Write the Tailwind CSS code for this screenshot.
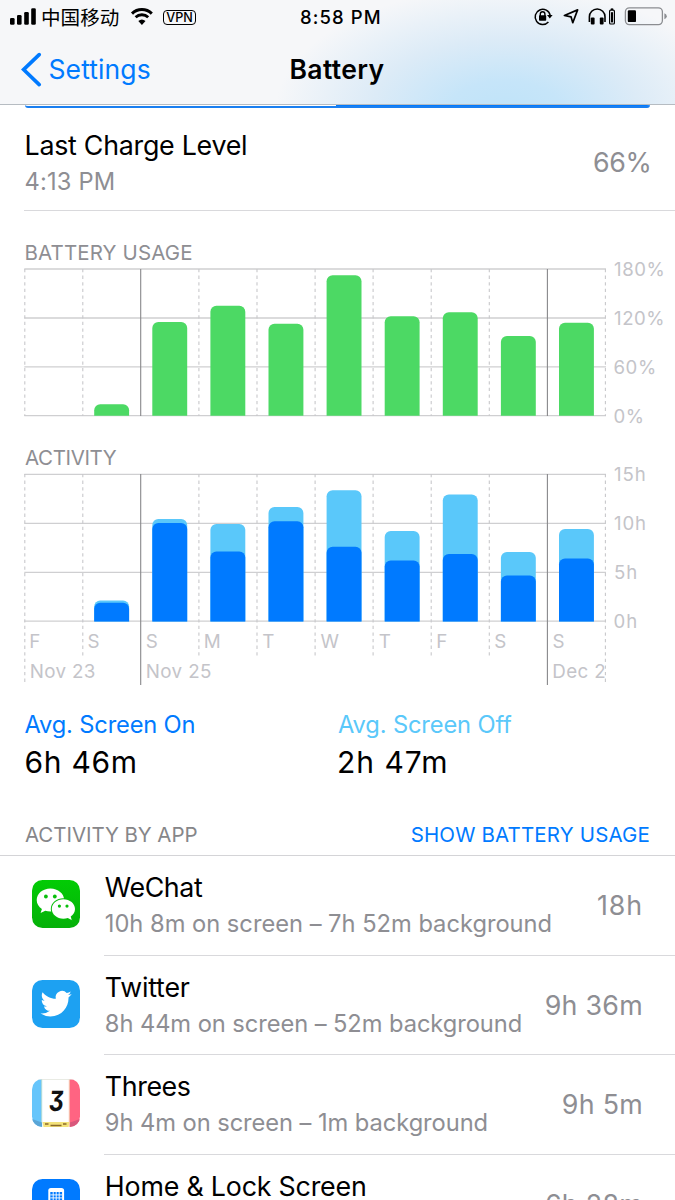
<!DOCTYPE html>
<html lang="en">
<head>
<meta charset="utf-8">
<title>Battery</title>
<script src="https://cdn.jsdelivr.net/npm/@tailwindcss/browser@4"></script>
</head>
<body class="w-[675px] h-[1200px] overflow-hidden bg-white text-black font-['Inter','Noto_Sans_CJK_SC',sans-serif]">
<div class="flex h-[1200px] flex-col overflow-hidden">

  <header class="h-[105px] shrink-0 border-b border-[#b6bcc2] bg-[#f6f7f9] bg-[radial-gradient(ellipse_230px_125px_at_505px_112px,#bfe3f9_0%,#c6e5f9_25%,#dcebf7_58%,rgba(246,247,249,0)_100%)]">
    <div class="flex h-[34px] items-center">
      <svg class="ml-[9px] h-[34px] w-[28px] shrink-0" viewBox="9 0 28 34">
        <rect x="10" y="18" width="4.6" height="6.7" rx="1.3"/><rect x="17" y="15" width="4.6" height="9.7" rx="1.3"/><rect x="24.2" y="12" width="4.6" height="12.7" rx="1.3"/><rect x="31.2" y="8.3" width="4.6" height="16.4" rx="1.3"/>
      </svg>
      <span class="ml-[4px] w-[80px] shrink-0 whitespace-nowrap font-['Noto_Sans_CJK_SC',sans-serif] text-[19.6px] leading-[34px]">中国移动</span>
      <svg class="ml-[8px] h-[34px] w-[26px] shrink-0" viewBox="129 0 26 34">
        <path d="M132 13.6a14.2 14.2 0 0 1 19.8 0" fill="none" stroke="#000" stroke-width="3"/>
        <path d="M135.6 17.3a9 9 0 0 1 12.6 0" fill="none" stroke="#000" stroke-width="2.8"/>
        <path d="M141.9 25l-3.6-4a5.6 5.6 0 0 1 7.2 0z"/>
      </svg>
      <span class="ml-[8px] flex h-[15px] w-[33px] shrink-0 items-center justify-center rounded-[4px] border-[1.4px] border-black pt-px text-[12.6px] font-medium leading-[14px]">VPN</span>
      <span class="ml-[104px] w-[90px] shrink-0 whitespace-nowrap text-[18.5px] font-medium tracking-[1.1px] leading-[34px]">8:58 PM</span>
      <svg class="ml-[140px] h-[34px] w-[140px] shrink-0" viewBox="530 0 140 34">
        <g fill="none" stroke="#000">
          <path d="M548.4 22a7.6 7.6 0 1 1 1.8-6.6" stroke-width="1.5"/>
          <path d="M540.3 16v-2a2.3 2.3 0 0 1 4.6 0v2" stroke-width="1.4"/>
          <path d="M577.6 9.9l-4.8 12.8-1.7-5.8-6.7-1.4z" stroke-width="1.7" stroke-linejoin="round"/>
          <path d="M589.4 22v-5.2a7.8 7.8 0 0 1 15.6 0V22" stroke-width="1.6"/>
          <rect x="609.6" y="10.2" width="4.8" height="13.8" rx="1" stroke-width="1.2"/>
          <rect x="625.4" y="7.8" width="37" height="16.8" rx="4" stroke="#8b8d91" stroke-width="1.3"/>
        </g>
        <path d="M547 15h5.6l-2.8 3.6z"/>
        <rect x="539" y="15.2" width="7.2" height="5.6" rx=".8"/>
        <rect x="590.8" y="17.6" width="3.8" height="7" rx="1"/><rect x="599.8" y="17.6" width="3.8" height="7" rx="1"/>
        <rect x="610.8" y="8.4" width="2.4" height="1.6"/><rect x="611" y="12.2" width="2" height="10.2"/>
        <rect x="627.8" y="10.3" width="8.2" height="11.8" rx="1.2"/>
        <path d="M664.4 13.2q2.4 1 2.4 3t-2.4 3z" fill="#8b8d91"/>
      </svg>
    </div>
    <div class="grid h-[69px] grid-cols-[289.5px_1fr] items-center text-[26.5px] leading-[36px]">
      <div class="flex items-center text-[#007aff]">
        <svg class="ml-[20px] h-[36px] w-[22px]" viewBox="20 50 22 36"><path d="M39.2 53.6L23.6 68.6l15.6 15" fill="none" stroke="#007aff" stroke-width="3.6" stroke-linecap="round"/></svg>
        <span class="ml-[6.5px] tracking-[0.1px]">Settings</span>
      </div>
      <h1 class="font-semibold tracking-[0.35px]">Battery</h1>
    </div>
  </header>

  <div class="ml-[25px] flex h-[3px] w-[625px] shrink-0 overflow-hidden rounded-b-[4px] border-b-2 border-[#1a7ff0]">
    <div class="w-[311px]"></div><div class="flex-1 bg-[#007aff]"></div>
  </div>

  <section class="ml-[24px] flex h-[103px] shrink-0 items-start justify-between border-b border-[#d9d9dc] pt-[20px]">
    <div class="pl-[0.5px]">
      <div class="h-[35px] text-[26.8px] leading-[35px] tracking-[-0.26px]">Last Charge Level</div>
      <div class="h-[37px] text-[23.7px] leading-[37px] tracking-[0.18px] text-[#8e8e93]">4:13 PM</div>
    </div>
    <div class="mr-[23.5px] text-[26.8px] leading-[69px] tracking-[-0.37px] text-[#8e8e93]">66%</div>
  </section>

  <svg class="h-[489px] w-[675px] shrink-0" viewBox="0 211 675 489" font-family="Inter, sans-serif">
    <defs>
      <clipPath id="usage"><rect x="0" y="260" width="675" height="155.8"/></clipPath>
      <clipPath id="act"><rect x="0" y="470" width="675" height="151.4"/></clipPath>
    </defs>
    <g font-size="20.5" fill="#8e8e93">
      <text x="24.5" y="260" letter-spacing=".13">BATTERY USAGE</text>
      <text x="25" y="465.3" letter-spacing="-.38">ACTIVITY</text>
    </g>
    <g stroke="#cfcfd1" stroke-width="1.3">
      <path d="M24.3 269H606M24.3 318H606M24.3 366.8H606M24.3 415.6H606M24.3 474.3H606M24.3 523.3H606M24.3 572.3H606M24.3 621.2H606"/>
    </g>
    <g stroke="#c8c8cb" stroke-width="1.1" stroke-dasharray="3.3 3.3">
      <path d="M24.8 269V416M82.8 269V416M198.9 269V416M257 269V416M315.1 269V416M373.1 269V416M431.2 269V416M489.3 269V416M605.4 269V416"/>
      <path d="M24.8 474V685M82.8 474V658M198.9 474V658M257 474V658M315.1 474V658M373.1 474V658M431.2 474V658M489.3 474V658M605.4 474V685"/>
    </g>
    <path d="M140.7 269V416M547.4 269V416M140.7 474V685M547.4 474V685" stroke="#88888b" stroke-width="1.1"/>
    <g fill="#4cd964" clip-path="url(#usage)">
      <rect x="94.2" y="404.3" width="34.9" height="30" rx="6"/>
      <rect x="152.3" y="322" width="34.9" height="110" rx="6"/>
      <rect x="210.4" y="305.7" width="34.9" height="130" rx="6"/>
      <rect x="268.5" y="323.7" width="34.9" height="110" rx="6"/>
      <rect x="326.6" y="275.3" width="34.9" height="160" rx="6"/>
      <rect x="384.7" y="316.3" width="34.9" height="120" rx="6"/>
      <rect x="442.8" y="312.2" width="34.9" height="120" rx="6"/>
      <rect x="500.9" y="336" width="34.9" height="100" rx="6"/>
      <rect x="559" y="322.8" width="34.9" height="110" rx="6"/>
    </g>
    <g fill="#5ac8fa" clip-path="url(#act)">
      <rect x="94.2" y="600.4" width="34.9" height="40" rx="6"/>
      <rect x="152.3" y="519.1" width="34.9" height="120" rx="6"/>
      <rect x="210.4" y="524" width="34.9" height="120" rx="6"/>
      <rect x="268.5" y="507" width="34.9" height="130" rx="6"/>
      <rect x="326.6" y="490.3" width="34.9" height="150" rx="6"/>
      <rect x="384.7" y="531" width="34.9" height="110" rx="6"/>
      <rect x="442.8" y="494.4" width="34.9" height="140" rx="6"/>
      <rect x="500.9" y="552" width="34.9" height="90" rx="6"/>
      <rect x="559" y="529" width="34.9" height="110" rx="6"/>
    </g>
    <g fill="#007aff" clip-path="url(#act)">
      <rect x="94.2" y="602.8" width="34.9" height="40" rx="6"/>
      <rect x="152.3" y="523" width="34.9" height="120" rx="6"/>
      <rect x="210.4" y="551.4" width="34.9" height="90" rx="6"/>
      <rect x="268.5" y="521.3" width="34.9" height="120" rx="6"/>
      <rect x="326.6" y="546.7" width="34.9" height="90" rx="6"/>
      <rect x="384.7" y="560.4" width="34.9" height="80" rx="6"/>
      <rect x="442.8" y="554" width="34.9" height="90" rx="6"/>
      <rect x="500.9" y="575.6" width="34.9" height="60" rx="6"/>
      <rect x="559" y="558.4" width="34.9" height="90" rx="6"/>
    </g>
    <g font-size="18.6" fill="#c4c4c9" letter-spacing=".58">
      <text x="614" y="275.8">180%</text><text x="614" y="324.8">120%</text><text x="613.5" y="373.7">60%</text><text x="613.5" y="422.5">0%</text>
      <g letter-spacing=".9"><text x="614" y="481">15h</text><text x="614" y="530">10h</text><text x="614" y="579">5h</text><text x="613.5" y="627.8">0h</text></g>
    </g>
    <g font-size="18.8" fill="#c4c4c9">
      <text x="29.3" y="647.8">F</text><text x="87.6" y="647.8">S</text><text x="145.7" y="647.8">S</text><text x="203.7" y="647.8">M</text><text x="262.3" y="647.8">T</text><text x="320.5" y="647.8">W</text><text x="378.7" y="647.8">T</text><text x="436.3" y="647.8">F</text><text x="494.3" y="647.8">S</text><text x="552.5" y="647.8">S</text>
      <text x="29.7" y="677.8" letter-spacing=".33">Nov 23</text><text x="145.7" y="677.8" letter-spacing=".42">Nov 25</text><text x="552.3" y="677.8" letter-spacing=".35">Dec 2</text>
    </g>
  </svg>

  <section class="grid h-[112px] shrink-0 grid-cols-[313.5px_1fr] pl-[24.5px] pt-[6px]">
    <div>
      <div class="h-[37px] text-[23.7px] leading-[38px] tracking-[-0.17px] text-[#007aff]">Avg. Screen On</div>
      <div class="h-[38px] text-[30px] leading-[38px] tracking-[0.7px]">6h 46m</div>
    </div>
    <div>
      <div class="h-[37px] text-[23.7px] leading-[38px] tracking-[-0.14px] text-[#5ac8fa]">Avg. Screen Off</div>
      <div class="-ml-px h-[38px] text-[30px] leading-[38px] tracking-[1px]">2h 47m</div>
    </div>
  </section>

  <div class="flex h-[44px] shrink-0 items-center justify-between border-b border-[#d4d4d7] pl-[25px] pr-[25px] pt-[2px] text-[20.5px] leading-[41px]">
    <span class="tracking-[-0.07px] text-[#868689]">ACTIVITY BY APP</span>
    <span class="tracking-[0.16px] text-[#007aff]">SHOW BATTERY USAGE</span>
  </div>

  <ul>
    <li class="flex h-[99.5px]">
      <svg class="ml-[32.3px] mt-[24px] h-[48px] w-[48px] shrink-0" viewBox="0 0 48 48">
        <defs><linearGradient id="wg" x2="0" y2="1"><stop stop-color="#02cc05"/><stop offset="1" stop-color="#05b009"/></linearGradient></defs>
        <rect width="48" height="48" rx="10.5" fill="url(#wg)"/>
        <path d="M18.4 8.6C10.8 8.6 4.7 13.7 4.7 20.1c0 3.7 2 6.9 5.2 9l-1.300 4 4.700-2.400c1.600.5 3.300.8 5.100.8 7.600 0 13.800-5.100 13.800-11.400S26 8.600 18.400 8.600z" fill="#fff"/>
        <path d="M31.4 19.3c6.4 0 11.6 4.3 11.6 9.700 0 3.100-1.700 5.800-4.300 7.600l1 3.400-3.900-2c-1.400.4-2.900.7-4.400.7-6.400 0-11.600-4.300-11.600-9.700s5.200-9.700 11.600-9.700z" fill="#fff" stroke="#08bd0b" stroke-width="2" paint-order="stroke"/>
        <g fill="#08bf0b"><circle cx="13.9" cy="16.5" r="1.9"/><circle cx="22.8" cy="16.5" r="1.9"/><circle cx="27.4" cy="26.1" r="1.6"/><circle cx="35" cy="26.1" r="1.6"/></g>
      </svg>
      <div class="ml-[24px] flex flex-1 border-b border-[#d9d9dc]">
        <div class="flex-1 whitespace-nowrap pl-[0.5px] pt-[13px]">
          <div class="h-[37px] text-[26.8px] leading-[37px] tracking-[-0.4px]">WeChat</div>
          <div class="h-[36px] text-[23.7px] leading-[36px] tracking-[-0.01px] text-[#8e8e93]">10h 8m on screen – 7h 52m background</div>
        </div>
        <div class="mr-[32px] text-[26.8px] leading-[99px] tracking-[0.9px] text-[#8e8e93]">18h</div>
      </div>
    </li>
    <li class="flex h-[99.5px]">
      <svg class="ml-[32.3px] mt-[24px] h-[48px] w-[48px] shrink-0" viewBox="0 0 48 48">
        <rect width="48" height="48" rx="10.5" fill="#1da1f2"/>
        <path transform="translate(8.5 8.1) scale(1.3)" fill="#fff" d="M23.953 4.570a10 10 0 01-2.825.775 4.958 4.958 0 002.163-2.723c-.951.555-2.005.959-3.127 1.184a4.920 4.920 0 00-8.384 4.482C7.690 8.095 4.067 6.130 1.640 3.162a4.822 4.822 0 00-.666 2.475c0 1.710.870 3.213 2.188 4.096a4.904 4.904 0 01-2.228-.616v.060a4.923 4.923 0 003.946 4.827 4.996 4.996 0 01-2.212.085 4.936 4.936 0 004.604 3.417 9.867 9.867 0 01-6.102 2.105c-.390 0-.779-.023-1.170-.067a13.995 13.995 0 007.557 2.209c9.053 0 13.998-7.496 13.998-13.985 0-.210 0-.420-.015-.630A9.935 9.935 0 0024 4.590z"/>
      </svg>
      <div class="ml-[24px] flex flex-1 border-b border-[#d9d9dc]">
        <div class="flex-1 whitespace-nowrap pl-[0.5px] pt-[13px]">
          <div class="h-[37px] text-[26.8px] leading-[36px] tracking-[-0.21px]">Twitter</div>
          <div class="h-[36px] text-[23.7px] leading-[36px] tracking-[-0.07px] text-[#8e8e93]">8h 44m on screen – 52m background</div>
        </div>
        <div class="mr-[32px] text-[26.8px] leading-[99px] tracking-[0.27px] text-[#8e8e93]">9h 36m</div>
      </div>
    </li>
    <li class="flex h-[99.5px]">
      <svg class="ml-[32.3px] mt-[24px] h-[48px] w-[48px] shrink-0" viewBox="0 0 48 48">
        <defs><clipPath id="tc"><rect width="48" height="48" rx="10.5"/></clipPath></defs>
        <g clip-path="url(#tc)">
          <rect width="48" height="48" fill="#fff"/>
          <rect width="10" height="48" fill="#66c5fb"/><rect x="38" width="10" height="48" fill="#ff6482"/>
          <rect x="9" width="1.2" height="48" fill="#a9d9dd"/><rect x="36.8" width="1.2" height="48" fill="#f7b9a8"/>
          <rect width="48" height="1" fill="#dfe3d8" opacity=".7"/>
          <path d="M0 40l10 3.5V48H0z" fill="#5aa5d6"/><path d="M48 40l-10 3.5V48h10z" fill="#d8587c"/>
          <path d="M10.5 43h27l-1 5h-25z" fill="#f3e27a"/>
          <path d="M13 45h3.5M31 45h3.5M18.5 46.500h11" stroke="#8a6a2a" stroke-width="1.5"/>
        </g>
        <text transform="translate(15.9 31.8) skewX(-6) scale(.82 1)" font-family="Inter, sans-serif" font-weight="700" font-size="28" fill="#111" style="font-feature-settings:'cv09'">3</text>
      </svg>
      <div class="ml-[24px] flex flex-1 border-b border-[#d9d9dc]">
        <div class="flex-1 whitespace-nowrap pl-[0.5px] pt-[13px]">
          <div class="h-[37px] text-[26.8px] leading-[37px] tracking-[-0.4px]">Threes</div>
          <div class="h-[36px] text-[23.7px] leading-[36px] tracking-[-0.06px] text-[#8e8e93]">9h 4m on screen – 1m background</div>
        </div>
        <div class="mr-[32px] text-[26.8px] leading-[99px] tracking-[0.3px] text-[#8e8e93]">9h 5m</div>
      </div>
    </li>
    <li class="flex h-[99.5px]">
      <svg class="ml-[32.3px] mt-[24px] h-[48px] w-[48px] shrink-0" viewBox="0 0 48 48">
        <rect width="48" height="48" rx="10.5" fill="#007aff"/>
        <rect x="16.3" y="9" width="15.8" height="30" rx="2.600" fill="#fff"/>
        <path d="M18.3 13h11.8v20H18.3z" fill="#007aff"/>
        <path d="M21.2 13v20M24.2 13v20M27.2 13v20M18.3 15.9h11.8M18.3 18.9h11.8M18.3 21.9h11.8" stroke="#fff" stroke-width=".9"/>
      </svg>
      <div class="ml-[24px] flex flex-1">
        <div class="flex-1 whitespace-nowrap pl-[0.5px] pt-[13px]">
          <div class="h-[36px] text-[26.8px] leading-[36px] tracking-[-0.2px]">Home &amp; Lock Screen</div>
        </div>
        <div class="mr-[32px] text-[26.8px] leading-[98px] tracking-[0.27px] text-[#8e8e93]">6h 28m</div>
      </div>
    </li>
  </ul>
</div>
</body>
</html>
